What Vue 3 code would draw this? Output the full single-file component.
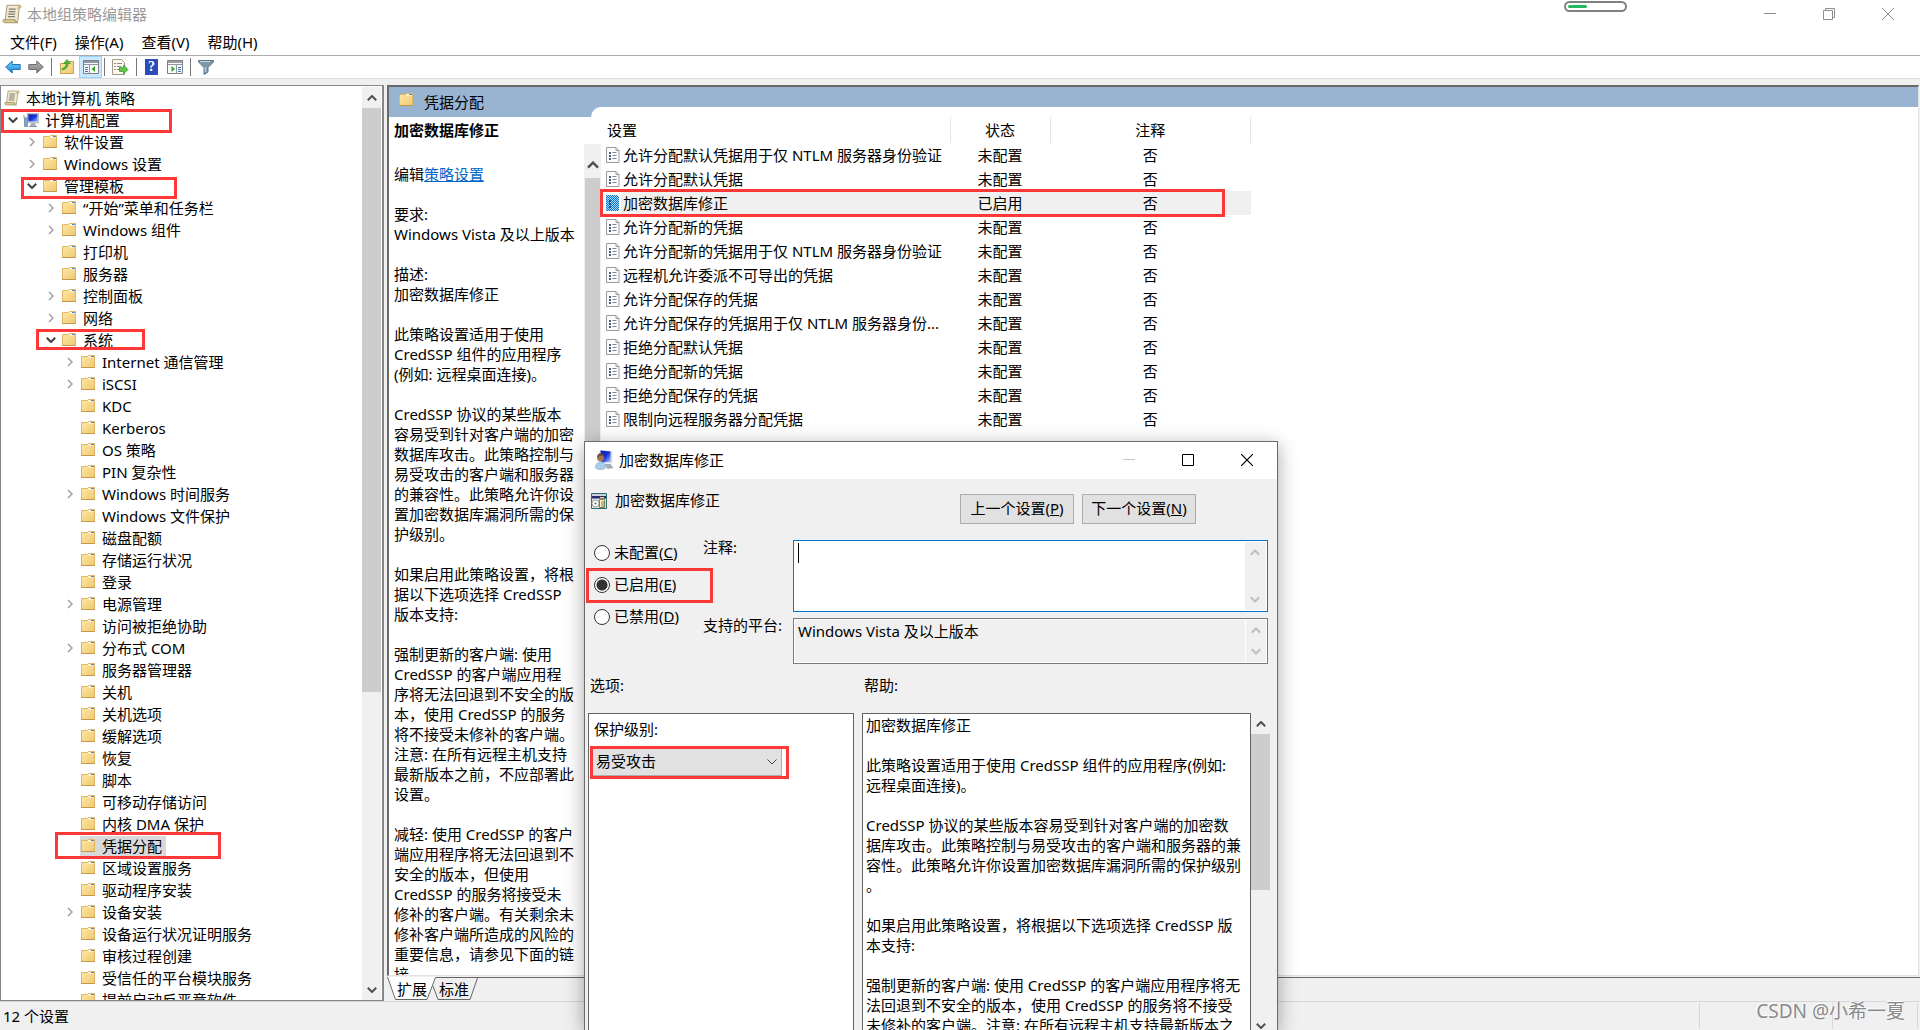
<script setup>
import { ref } from 'vue'

const menus = ['文件(F)', '操作(A)', '查看(V)', '帮助(H)']

// [level, label, state]: state is 'closed', 'open' or '' for a leaf
const rows = [
  [0, '本地计算机 策略', ''],
  [1, '计算机配置', 'open', 'mark-computer'],
  [2, '软件设置', 'closed'],
  [2, 'Windows 设置', 'closed'],
  [2, '管理模板', 'open', 'mark-templates'],
  [3, '“开始”菜单和任务栏', 'closed'],
  [3, 'Windows 组件', 'closed'],
  [3, '打印机', ''],
  [3, '服务器', ''],
  [3, '控制面板', 'closed'],
  [3, '网络', 'closed'],
  [3, '系统', 'open', 'mark-system'],
  [4, 'Internet 通信管理', 'closed'],
  [4, 'iSCSI', 'closed'],
  [4, 'KDC', ''],
  [4, 'Kerberos', ''],
  [4, 'OS 策略', ''],
  [4, 'PIN 复杂性', ''],
  [4, 'Windows 时间服务', 'closed'],
  [4, 'Windows 文件保护', ''],
  [4, '磁盘配额', ''],
  [4, '存储运行状况', ''],
  [4, '登录', ''],
  [4, '电源管理', 'closed'],
  [4, '访问被拒绝协助', ''],
  [4, '分布式 COM', 'closed'],
  [4, '服务器管理器', ''],
  [4, '关机', ''],
  [4, '关机选项', ''],
  [4, '缓解选项', ''],
  [4, '恢复', ''],
  [4, '脚本', ''],
  [4, '可移动存储访问', ''],
  [4, '内核 DMA 保护', ''],
  [4, '凭据分配', '', 'mark-credentials'],
  [4, '区域设置服务', ''],
  [4, '驱动程序安装', ''],
  [4, '设备安装', 'closed'],
  [4, '设备运行状况证明服务', ''],
  [4, '审核过程创建', ''],
  [4, '受信任的平台模块服务', ''],
  [4, '提前启动反恶意软件', ''],
]
const iconFor = (i) => (i === 0 ? '#i-scroll' : i === 1 ? '#i-computer' : '#i-folder')

const settings = [
  '允许分配默认凭据用于仅 NTLM 服务器身份验证',
  '允许分配默认凭据',
  '加密数据库修正',
  '允许分配新的凭据',
  '允许分配新的凭据用于仅 NTLM 服务器身份验证',
  '远程机允许委派不可导出的凭据',
  '允许分配保存的凭据',
  '允许分配保存的凭据用于仅 NTLM 服务器身份...',
  '拒绝分配默认凭据',
  '拒绝分配新的凭据',
  '拒绝分配保存的凭据',
  '限制向远程服务器分配凭据',
]

const description = `要求:
Windows Vista 及以上版本

描述:
加密数据库修正

此策略设置适用于使用
CredSSP 组件的应用程序
(例如: 远程桌面连接)。

CredSSP 协议的某些版本
容易受到针对客户端的加密
数据库攻击。此策略控制与
易受攻击的客户端和服务器
的兼容性。此策略允许你设
置加密数据库漏洞所需的保
护级别。

如果启用此策略设置，将根
据以下选项选择 CredSSP
版本支持:

强制更新的客户端: 使用
CredSSP 的客户端应用程
序将无法回退到不安全的版
本，使用 CredSSP 的服务
将不接受未修补的客户端。
注意: 在所有远程主机支持
最新版本之前，不应部署此
设置。

减轻: 使用 CredSSP 的客户
端应用程序将无法回退到不
安全的版本，但使用
CredSSP 的服务将接受未
修补的客户端。有关剩余未
修补客户端所造成的风险的
重要信息，请参见下面的链
接`

const help = `加密数据库修正

此策略设置适用于使用 CredSSP 组件的应用程序(例如:
远程桌面连接)。

CredSSP 协议的某些版本容易受到针对客户端的加密数
据库攻击。此策略控制与易受攻击的客户端和服务器的兼
容性。此策略允许你设置加密数据库漏洞所需的保护级别
。

如果启用此策略设置，将根据以下选项选择 CredSSP 版
本支持:

强制更新的客户端: 使用 CredSSP 的客户端应用程序将无
法回退到不安全的版本，使用 CredSSP 的服务将不接受
未修补的客户端。注意: 在所有远程主机支持最新版本之`

const states = [
  ['unset', '未配置', 'C'],
  ['on', '已启用', 'E'],
  ['off', '已禁用', 'D'],
]
const state = ref('on')
const comment = ref('')
const platform = ref('Windows Vista 及以上版本')
const level = ref('易受攻击')
</script>

<template>
  <svg class="sprite" width="0" height="0" aria-hidden="true">
    <defs>
      <linearGradient id="g-folder" x1="0" y1="0" x2="1" y2="1">
        <stop offset="0" stop-color="#ffe9a8" /><stop offset="1" stop-color="#efc870" />
      </linearGradient>
      <linearGradient id="g-screen" x1="0" y1="0" x2="1" y2="1">
        <stop offset="0" stop-color="#0a1fb4" /><stop offset=".5" stop-color="#1733d6" /><stop offset="1" stop-color="#9fc0ff" />
      </linearGradient>
      <linearGradient id="g-blue" x1="0" y1="0" x2="0" y2="1">
        <stop offset="0" stop-color="#7fd0fa" /><stop offset="1" stop-color="#1585d8" />
      </linearGradient>
      <linearGradient id="g-gray" x1="0" y1="0" x2="0" y2="1">
        <stop offset="0" stop-color="#b5b5b5" /><stop offset="1" stop-color="#7c7c7c" />
      </linearGradient>
    </defs>
    <symbol id="i-folder" viewBox="0 0 16 16">
      <path d="M1.500 2.500h6l1-1h6v12h-13z" fill="url(#g-folder)" stroke="#dcb768" />
      <path d="M8.500 2h5.500v1.500H8z" fill="#fff8e0" />
      <path d="M11 2h3v1h-3z" fill="#3d8de0" />
      <path d="M1 13.500h14" stroke="#c39a49" />
    </symbol>
    <symbol id="i-scroll" viewBox="0 0 16 16">
      <path d="M4 1h10.500c1 1 .6 2.500-.8 2.700L12.500 14H2.500z" fill="#f3ecd2" stroke="#a79a75" stroke-width=".8" />
      <path d="M13 1c2 0 2.500 2.500.5 3H12z" fill="#c9b98a" />
      <path d="M1 12.500h9.500c0 1.500.8 2.500 2 2.500H2.500C1 15 .5 13.800 1 12.500z" fill="#d8c795" stroke="#a08f60" stroke-width=".7" />
      <path d="M5.500 4h5.500M5.300 6h5.500M5 8h5.500M4.800 10h5.500" stroke="#7f7c74" />
    </symbol>
    <symbol id="i-computer" viewBox="0 0 16 16">
      <path d="M4 1.500h11.500v9.500l-10.500-.5z" fill="#d5dbe2" stroke="#98a2ae" stroke-width=".6" />
      <path d="M5 2.300h9.500v7.500l-9-.5z" fill="url(#g-screen)" />
      <path d="M8 11h4l1 3H7z" fill="#a9b3bd" /><path d="M6 14.500h8" stroke="#8b949e" />
      <path d="M1.500 6h3v8.500h-3z" fill="#7fa9cf" stroke="#50708f" stroke-width=".6" />
      <path d="M1 3v3h4V3" stroke="#8c98a4" fill="none" />
    </symbol>
    <symbol id="i-user" viewBox="0 0 18 20">
      <path d="M4 0l13 1v12l-12 1z" fill="#d6dde6" />
      <path d="M5 .5l10 1v10l-9 1z" fill="url(#g-screen)" />
      <path d="M9 14h6l3 4-6 1z" fill="#a5adb5" />
      <circle cx="5" cy="8" r="3.400" fill="#a4764d" /><path d="M2 8c-1-5 4-6 6-3-1 1-2 1-3 1s-2 1-3 2z" fill="#6b5038" />
      <path d="M0 18c0-4 2-6 5-6s5 2 5 6c-3 2-7 2-10 0z" fill="#a9cdea" stroke="#6f9cc0" stroke-width=".5" />
    </symbol>
    <symbol id="i-policy" viewBox="0 0 14 16">
      <path d="M.5.500h9.500l3 3v12H.5z" fill="#fcfcfc" stroke="#9b9b9b" /><path d="M10 .5v3h3" fill="#ddd" stroke="#9b9b9b" />
      <path d="M3 6h2M3 9h2M3 12h2" stroke="#1d2b55" stroke-width="1.600" />
      <path d="M6.500 5.500h4M6.500 8.500h4M6.500 11.500h4" stroke="#85859c" />
    </symbol>
    <symbol id="i-policy-on" viewBox="0 0 14 16">
      <path d="M0 0h11l2 2v14H0z" fill="#a8d4f4" />
      <path d="M0 .5h11M0 2.500h13M0 4.500h13M0 6.500h13M0 8.500h13M0 10.500h13M0 12.500h13M0 14.500h13" stroke="#0a78d0" stroke-dasharray="1 1" />
      <path d="M1 1.500h11M1 3.500h12M1 5.500h12M1 7.500h12M1 9.500h12M1 11.500h12M1 13.500h12M1 15.500h12" stroke="#0a78d0" stroke-dasharray="1 1" />
      <path d="M3 6h2M3 9h2M3 12h2" stroke="#0a3c78" stroke-width="1.600" />
    </symbol>
    <symbol id="i-sheet" viewBox="0 0 16 16">
      <path d="M.5.500h15v15H.5z" fill="#dfe3e0" stroke="#287070" /><path d="M1 1h14v1.500H1z" fill="#c9c9dd" /><path d="M1 3h14v2.500H1z" fill="#2b2b70" /><path d="M9 4.500h4" stroke="#f3d054" />
      <circle cx="4.500" cy="10.500" r="3.500" fill="#fff" stroke="#999" /><circle cx="4.500" cy="10.500" r="1" fill="#555" />
      <path d="M8.500 6.500h5v8h-5z" fill="#fff6c8" stroke="#8b7a45" /><path d="M10 9h3M10 11h3M10 13h3" stroke="#777" />
    </symbol>
    <symbol id="i-up" viewBox="0 0 10 6"><path d="M.8 5.200L5 1l4.200 4.200" fill="none" stroke="currentColor" stroke-width="2" /></symbol>
    <symbol id="i-down" viewBox="0 0 10 6"><path d="M.8.800L5 5 9.200.800" fill="none" stroke="currentColor" stroke-width="2" /></symbol>
    <symbol id="i-right" viewBox="0 0 6 10"><path d="M1 1l4 4-4 4" fill="none" stroke="currentColor" stroke-width="1.500" /></symbol>
  </svg>

  <div class="window">
    <header class="titlebar">
      <svg width="20" height="20"><use href="#i-scroll" /></svg>
      <h1>本地组策略编辑器</h1>
      <span class="pill"><i></i></span>
      <div class="winbtns">
        <button aria-label="最小化"><svg width="12" height="12"><path d="M0 5.500h12" stroke="#8e8e8e" /></svg></button>
        <button aria-label="还原"><svg width="12" height="12"><path d="M.5 2.500h9v9h-9zM2.500 2.500v-2h9v9h-2" fill="none" stroke="#8e8e8e" /></svg></button>
        <button aria-label="关闭"><svg width="12" height="12"><path d="M0 0l12 12M12 0L0 12" stroke="#8e8e8e" /></svg></button>
      </div>
    </header>

    <nav class="menubar"><button v-for="m in menus" :key="m">{{ m }}</button></nav>

    <div class="toolbar">
      <button aria-label="后退"><svg width="16" height="14"><path d="M.7 7l6.500-6v3.500h8v5h-8V13z" fill="url(#g-blue)" stroke="#1c76b8" /></svg></button>
      <button aria-label="前进"><svg width="16" height="14"><path d="M15.300 7l-6.500-6v3.500h-8v5h8V13z" fill="url(#g-gray)" stroke="#707070" /></svg></button>
      <span class="sep"></span>
      <button aria-label="上一级"><svg width="16" height="16"><path d="M1.500 4.500h5l1-2h7v12h-13z" fill="url(#g-folder)" stroke="#c9a14f" /><path d="M3 9.500C6 9 7 7 7 4.500H4.500L8 .5l3.500 4H9C9 8 7 10.500 3 11z" fill="#4fb83c" stroke="#2f8f25" stroke-width=".6" /></svg></button>
      <button class="active" aria-label="显示/隐藏控制台树"><svg width="16" height="14"><path d="M.5.500h15v13H.5z" fill="#fafafa" stroke="#7a8087" /><path d="M1 2h14" stroke="#8d99a8" stroke-width="2" /><path d="M1 4.500h14M6.500 5v9" stroke="#8f979f" /><path d="M2 7.500h3M2 9.500h3M2 11.500h3" stroke="#4078b8" /><path d="M12 6v6L8.500 9z" fill="#37a52c" /></svg></button>
      <span class="sep"></span>
      <button aria-label="导出列表"><svg width="17" height="16"><path d="M.5.500h9l3 3v12H.5z" fill="#fffbe8" stroke="#9f9a87" /><path d="M2.500 4.500h1M2.500 7.500h1M2.500 10.500h1" stroke="#222" /><path d="M5 4.500h5M5 7.500h4M5 10.500h3" stroke="#8286a8" /><path d="M7.500 8.500h4V6l4.500 4.500-4.500 4.500v-2.500h-4z" fill="#5cc747" stroke="#2e9626" stroke-width=".7" /></svg></button>
      <span class="sep"></span>
      <button class="helpbtn" aria-label="帮助">?</button>
      <button aria-label="显示/隐藏操作窗格"><svg width="16" height="14"><path d="M.5.500h15v13H.5z" fill="#fafafa" stroke="#7a8087" /><path d="M1 2h14" stroke="#9a9fa6" stroke-width="2" /><path d="M1 4.500h14M9.500 5v9" stroke="#8f979f" /><path d="M11 7.500h3M11 9.500h3M11 11.500h3" stroke="#4078b8" /><path d="M4.500 6v6L8 9z" fill="#37a52c" /></svg></button>
      <span class="sep"></span>
      <button aria-label="筛选器"><svg width="16" height="16"><path d="M.5 1.500h15v1.500L10 8.500V13l-4 2.500v-7L.5 3z" fill="#7d98ab" stroke="#5b7485" /><path d="M2 2.500h10" stroke="#c9dbe6" /><path d="M7.500 8v5" stroke="#b9cfdc" stroke-width="1.500" /></svg></button>
    </div>

    <main class="main">
      <section class="tree">
        <ul>
          <li v-for="(r, i) in rows" :key="i" :style="{ paddingLeft: r[0] * 19 - 15 + 'px' }" :class="{ root: i === 0, selected: r[3] === 'mark-credentials' }">
            <span class="twist" :class="r[2]">
              <svg v-if="r[2] === 'closed'" width="6" height="10"><use href="#i-right" /></svg>
              <svg v-if="r[2] === 'open'" width="10" height="6"><use href="#i-down" /></svg>
            </span>
            <span class="node"><svg width="16" height="16"><use :href="iconFor(i)" /></svg><span>{{ r[1] }}</span></span>
            <span v-if="r[3]" class="mark" :class="r[3]"></span>
          </li>
        </ul>
        <div class="scrollbar"><span class="arrow"><svg width="10" height="6"><use href="#i-up" /></svg></span><span class="thumb"></span><span class="arrow"><svg width="10" height="6"><use href="#i-down" /></svg></span></div>
      </section>

      <section class="results">
        <div class="pane">
          <aside class="detail">
            <div class="pane-title"><svg width="16" height="16"><use href="#i-folder" /></svg>凭据分配</div>
            <h2>加密数据库修正</h2>
            <div class="detail-body">
              <div class="detail-text">
                <p class="edit">编辑<a href="#">策略设置</a></p>
                <p class="lines">{{ description }}</p>
              </div>
              <div class="scrollbar"><span class="arrow"><svg width="12" height="8"><use href="#i-up" /></svg></span><span class="thumb"></span></div>
            </div>
          </aside>
          <div class="list">
            <table>
              <thead><tr><th class="c-name">设置</th><th class="c-state"><span>状态</span></th><th class="c-note"><span>注释</span></th></tr></thead>
              <tbody>
                <tr v-for="(s, i) in settings" :key="s" :class="{ current: i === 2 }">
                  <td class="c-name"><svg width="14" height="16"><use :href="i === 2 ? '#i-policy-on' : '#i-policy'" /></svg><span>{{ s }}</span><span v-if="i === 2" class="mark mark-setting"></span></td>
                  <td>{{ i === 2 ? '已启用' : '未配置' }}</td>
                  <td>否</td>
                </tr>
              </tbody>
            </table>
          </div>
        </div>
        <div class="tabs">
          <svg width="94" height="24"><path d="M0 0l8 22.500h32L49 0z" fill="#fff" /><path d="M.5 0l8 22.500H40L48.500.500H1500M46 9l5 13.500h32L90.500 1" fill="none" stroke="#666" /></svg>
          <button>扩展</button><button>标准</button>
        </div>
      </section>
    </main>

    <footer class="status"><span>12 个设置</span><i></i><i></i><i></i></footer>
    <div class="watermark">CSDN @小希一夏</div>

    <section class="dialog" role="dialog" aria-label="加密数据库修正">
      <header>
        <svg width="19" height="20"><use href="#i-user" /></svg>
        <h2>加密数据库修正</h2>
        <div class="winbtns">
          <button aria-label="最小化" disabled><svg width="12" height="12"><path d="M0 5.500h12" stroke="#c4c4c4" /></svg></button>
          <button aria-label="最大化"><svg width="12" height="12"><path d="M.5.500h11v11H.5z" fill="none" stroke="#000" /></svg></button>
          <button aria-label="关闭"><svg width="12" height="12"><path d="M0 0l12 12M12 0L0 12" stroke="#000" stroke-width="1.200" /></svg></button>
        </div>
      </header>
      <div class="heading">
        <svg width="16" height="16"><use href="#i-sheet" /></svg>
        <span>加密数据库修正</span>
        <button>上一个设置(<u>P</u>)</button>
        <button>下一个设置(<u>N</u>)</button>
      </div>
      <div class="form">
        <div class="radios">
          <label v-for="s in states" :key="s[0]">
            <input v-model="state" type="radio" name="state" :value="s[0]" /><span class="radio-text">{{ s[1] }}(<u>{{ s[2] }}</u>)</span>
            <span v-if="s[0] === 'on'" class="mark mark-enabled"></span>
          </label>
        </div>
        <div class="fields">
          <label for="comment">注释:</label>
          <div class="box comment">
            <textarea id="comment" v-model="comment"></textarea><span class="caret"></span>
            <div class="spin"><svg width="10" height="7"><use href="#i-up" /></svg><svg width="10" height="7"><use href="#i-down" /></svg></div>
          </div>
          <label for="platform">支持的平台:</label>
          <div class="box platform">
            <textarea id="platform" v-model="platform" readonly></textarea>
            <div class="spin"><svg width="10" height="7"><use href="#i-up" /></svg><svg width="10" height="7"><use href="#i-down" /></svg></div>
          </div>
        </div>
      </div>
      <div class="captions"><span>选项:</span><span>帮助:</span></div>
      <div class="columns">
        <div class="options">
          <label for="level">保护级别:</label>
          <div class="select">
            <select id="level" v-model="level"><option>易受攻击</option><option>减轻</option><option>强制更新的客户端</option></select>
            <svg width="10" height="6"><path d="M.5.500L5 5 9.500.500" fill="none" stroke="#444" /></svg>
            <span class="mark mark-level"></span>
          </div>
        </div>
        <div class="help"><p class="lines">{{ help }}</p></div>
        <div class="scrollbar"><span class="arrow"><svg width="10" height="6"><use href="#i-up" /></svg></span><span class="thumb"></span><span class="arrow last"><svg width="10" height="6"><use href="#i-down" /></svg></span></div>
      </div>
    </section>
  </div>
</template>

<style>
body { margin: 0; overflow: hidden; }
</style>

<style scoped>
* { box-sizing: border-box; }
.sprite { position: absolute; }
.window { position: relative; display: flex; flex-direction: column; height: 100vh; overflow: hidden; background: #fff; color: #000; font: 15px/20px "Noto Sans", "Noto Sans CJK SC", sans-serif; }
button, textarea, select { font: inherit; color: inherit; }
button { padding: 0; border: 0; background: none; }
h1, h2, p, ul { margin: 0; padding: 0; font-size: 15px; font-weight: 400; }
svg { display: block; flex: none; }
.lines { white-space: pre; }
.mark { position: absolute; border: 3px solid #ff3737; pointer-events: none; z-index: 2; }

.titlebar { display: flex; align-items: center; height: 30px; flex: none; padding: 0 0 2px 2px; position: relative; }
.titlebar h1 { margin-left: 5px; color: #999; flex: 1; }
.pill { position: absolute; top: 1px; right: 293px; width: 63px; height: 11px; border: 2px solid #808080; border-radius: 6px; padding: 2px; }
.pill i { display: block; width: 19px; height: 3px; border-radius: 2px; background: #27b862; }
.winbtns { display: flex; }
.winbtns button { width: 59px; display: flex; justify-content: center; }
.titlebar .winbtns { margin-right: 3px; }

.menubar { display: flex; gap: 18px; height: 26px; flex: none; padding: 0 0 2px 10px; border-bottom: 1px solid #aaa; }
.toolbar { display: flex; align-items: center; height: 23px; flex: none; padding-left: 5px; border-bottom: 1px solid #dadada; }
.toolbar button { margin-right: 7px; height: 22px; display: flex; align-items: center; }
.toolbar .sep { width: 1px; height: 18px; background: #777; margin-right: 7px; }
.toolbar .active { width: 23px; justify-content: center; background: #cce8ff; border: 1px solid #99d1ff; margin: 0 2px 0 -3px; }
.toolbar .helpbtn { width: 13px; height: 16px; margin: 0 9px 0 1px; justify-content: center; background: #2a4cb8; color: #fff; font: bold 14px/16px "Liberation Serif", serif; }

.main { display: flex; flex: 1; min-height: 0; padding-top: 6px; background: #f0f0f0; }
.tree { display: flex; width: 384px; flex: none; border: 1px solid #828790; border-right-width: 2px; background: #fff; padding: 1px 1px 0 0; overflow: hidden; }
.tree ul { flex: 1; list-style: none; }
.tree li { position: relative; display: flex; align-items: center; height: 22px; white-space: nowrap; }
.tree li.root .twist { display: none; }
.tree li.root { padding-left: 3px; }
.twist { width: 18px; display: flex; justify-content: center; padding-right: 2px; color: #a0a0a0; flex: none; }
.twist.open { color: #404040; }
.node { display: flex; align-items: center; gap: 6px; height: 21px; padding: 0 4px 0 0; }
.selected .node { background: #d9d9d9; }
.mark-computer { left: 0; top: 0; width: 171px; height: 24px; }
.mark-templates { left: 20px; top: 2px; width: 156px; height: 22px; }
.mark-system { left: 35px; top: 0; width: 109px; height: 21px; }
.mark-credentials { left: 54px; top: -3px; width: 166px; height: 27px; }

.scrollbar { display: flex; flex-direction: column; background: #f0f0f0; color: #505050; flex: none; }
.scrollbar .arrow { display: flex; align-items: center; justify-content: center; height: 21px; flex: none; }
.scrollbar .arrow:last-child { margin-top: auto; }
.scrollbar .thumb { background: #cdcdcd; }
.tree .scrollbar { width: 19px; }
.tree .thumb { height: 64%; }

.results { display: flex; flex-direction: column; flex: 1; min-width: 0; margin-left: 3px; padding-bottom: 1px; }
.pane { display: flex; flex: 1; min-height: 0; overflow: hidden; border: 2px solid #696969; border-right: 1px solid #e3e3e3; border-bottom: 1px solid #e3e3e3; margin-right: 1px; background: linear-gradient(#99b4d1 30px, #fff 30px); }
.detail { position: relative; z-index: 1; display: flex; flex-direction: column; width: 212px; flex: none; }
.pane-title { display: flex; align-items: center; gap: 10px; height: 30px; flex: none; padding-left: 9px; }
.pane-title svg { margin-bottom: 4px; }
.detail h2 { height: 27px; flex: none; line-height: 27px; padding-left: 5px; font-weight: 700; }
.detail-body { display: flex; flex: 1; min-height: 0; }
.detail-text { flex: 1; overflow: hidden; padding: 20px 0 0 5px; }
.edit { margin-bottom: 20px; }
a { color: #0066cc; }
.detail .scrollbar { width: 17px; }
.detail .arrow { height: 34px; padding-top: 8px; }
.detail .thumb { height: 72%; margin: 0 1px; }
.list { flex: 1; margin: 20px 0 0 -10px; background: #fff; border-top-left-radius: 10px; padding: 10px 0 0 10px; }
table { border-collapse: collapse; table-layout: fixed; width: 650px; }
th { font-weight: 400; height: 26px; padding: 0; text-align: center; border-right: 1px solid #e5e5e5; }
th.c-name { width: 349px; text-align: left; padding-left: 6px; }
th.c-state { width: 100px; }
td { height: 24px; padding: 0; text-align: center; }
td.c-name { position: relative; display: flex; align-items: center; gap: 3px; padding-left: 5px; text-align: left; white-space: nowrap; }
.current td { background: #f0f0f0; }
.current td.c-name { background: linear-gradient(90deg, #fff 20px, #f0f0f0 20px); }
.mark-setting { left: -1px; top: -2px; width: 625px; height: 28px; }
.tabs { position: relative; display: flex; height: 23px; flex: none; gap: 12px; padding: 1px 0 0 10px; border-top: 1px solid #696969; margin-top: 1px; align-items: flex-start; }
.tabs svg { position: absolute; left: 0; top: -1px; }
.tabs button { position: relative; }

.status { display: flex; height: 29px; flex: none; border-top: 1px solid #d7d7d7; background: #f0f0f0; padding: 1px 2px 1px 3px; line-height: 26px; }
.status span { flex: 1; }
.status i { width: 133px; border-left: 1px solid #d7d7d7; }
.status i:nth-of-type(2) { width: 85px; }
.status i:nth-of-type(3) { width: 1px; }
.watermark { position: absolute; right: 15px; bottom: 6px; font-size: 19px; line-height: 26px; color: #8a8a8a; text-shadow: -1px -1px 0 #fff; }

.dialog { position: absolute; z-index: 5; left: 584px; top: 441px; bottom: 0; width: 694px; display: flex; flex-direction: column; background: #f0f0f0; border: 1px solid #6b6b6b; border-bottom: 0; box-shadow: 0 4px 18px rgba(0, 0, 0, .35); }
.dialog header { display: flex; align-items: center; height: 37px; flex: none; background: #fff; padding: 0 0 2px 10px; }
.dialog header h2 { flex: 1; margin-left: 5px; }
.dialog .winbtns { margin-right: 1px; }
.heading { display: flex; height: 61px; flex: none; padding: 13px 81px 0 6px; }
.heading svg { margin-top: 1px; }
.heading span { flex: 1; margin-left: 8px; line-height: 16px; }
.heading button { width: 114px; height: 30px; border: 1px solid #adadad; background: #e1e1e1; margin: 2px 0 0 8px; padding-bottom: 2px; white-space: nowrap; }
.form { display: flex; flex: none; height: 125px; }
.radios { width: 118px; display: flex; flex-direction: column; padding-left: 9px; margin-top: -3px; }
.radios label { position: relative; display: flex; align-items: center; gap: 4px; height: 32px; }
.radio-text { padding-bottom: 2px; }
.radios input { appearance: none; width: 16px; height: 16px; margin: 0; border: 1px solid #333; border-radius: 50%; background: #fff; }
.radios input:checked { background: radial-gradient(circle, #333 5px, #fff 6px); }
.mark-enabled { left: -8px; top: -1px; width: 127px; height: 35px; }
.fields { flex: 1; display: grid; grid-template-columns: 90px 1fr; grid-template-rows: 72px 46px; row-gap: 6px; padding-right: 9px; }
.fields label { line-height: 14px; }
.box { position: relative; display: flex; border: 1px solid #7a7a7a; padding: 1px; }
.box textarea { flex: 1; resize: none; border: 0; outline: 0; margin: 0; padding: 1px 3px; background: none; overflow: hidden; }
.comment { border-color: #0078d7; background: #fff; }
.platform { box-shadow: inset 0 0 0 1px #fff; }
.caret { position: absolute; left: 4px; top: 2px; width: 1px; height: 20px; background: #000; }
.spin { width: 21px; display: flex; flex-direction: column; justify-content: space-between; align-items: center; padding: 7px 1px 7px 0; background: #f0f0f0; color: #bfbfbf; }
.platform .spin { border-left: 1px solid #fff; }
.captions { display: flex; height: 48px; flex: none; padding: 10px 0 0 5px; }
.captions span { width: 274px; }
.columns { display: flex; flex: 1; min-height: 0; padding: 0 6px 0 3px; }
.options, .help { border: 1px solid #646464; border-bottom: 0; background: #fff; overflow: hidden; }
.options { width: 266px; margin-right: 8px; padding: 5px 3px; }
.options label { display: block; padding-left: 2px; }
.select { position: relative; width: 190px; height: 28px; margin-top: 9px; }
.select select { appearance: none; width: 190px; height: 28px; border: 1px solid #adadad; border-radius: 0; background: #e1e1e1; padding: 0 3px 2px; }
.select svg { position: absolute; right: 5px; top: 11px; }
.mark-level { left: -2px; top: -2px; width: 199px; height: 33px; }
.help { flex: 1; padding: 1px 3px; }
.columns .scrollbar { width: 20px; }
.columns .thumb { height: 156px; margin-right: 1px; }
.columns .arrow.last { height: 9px; }
</style>
